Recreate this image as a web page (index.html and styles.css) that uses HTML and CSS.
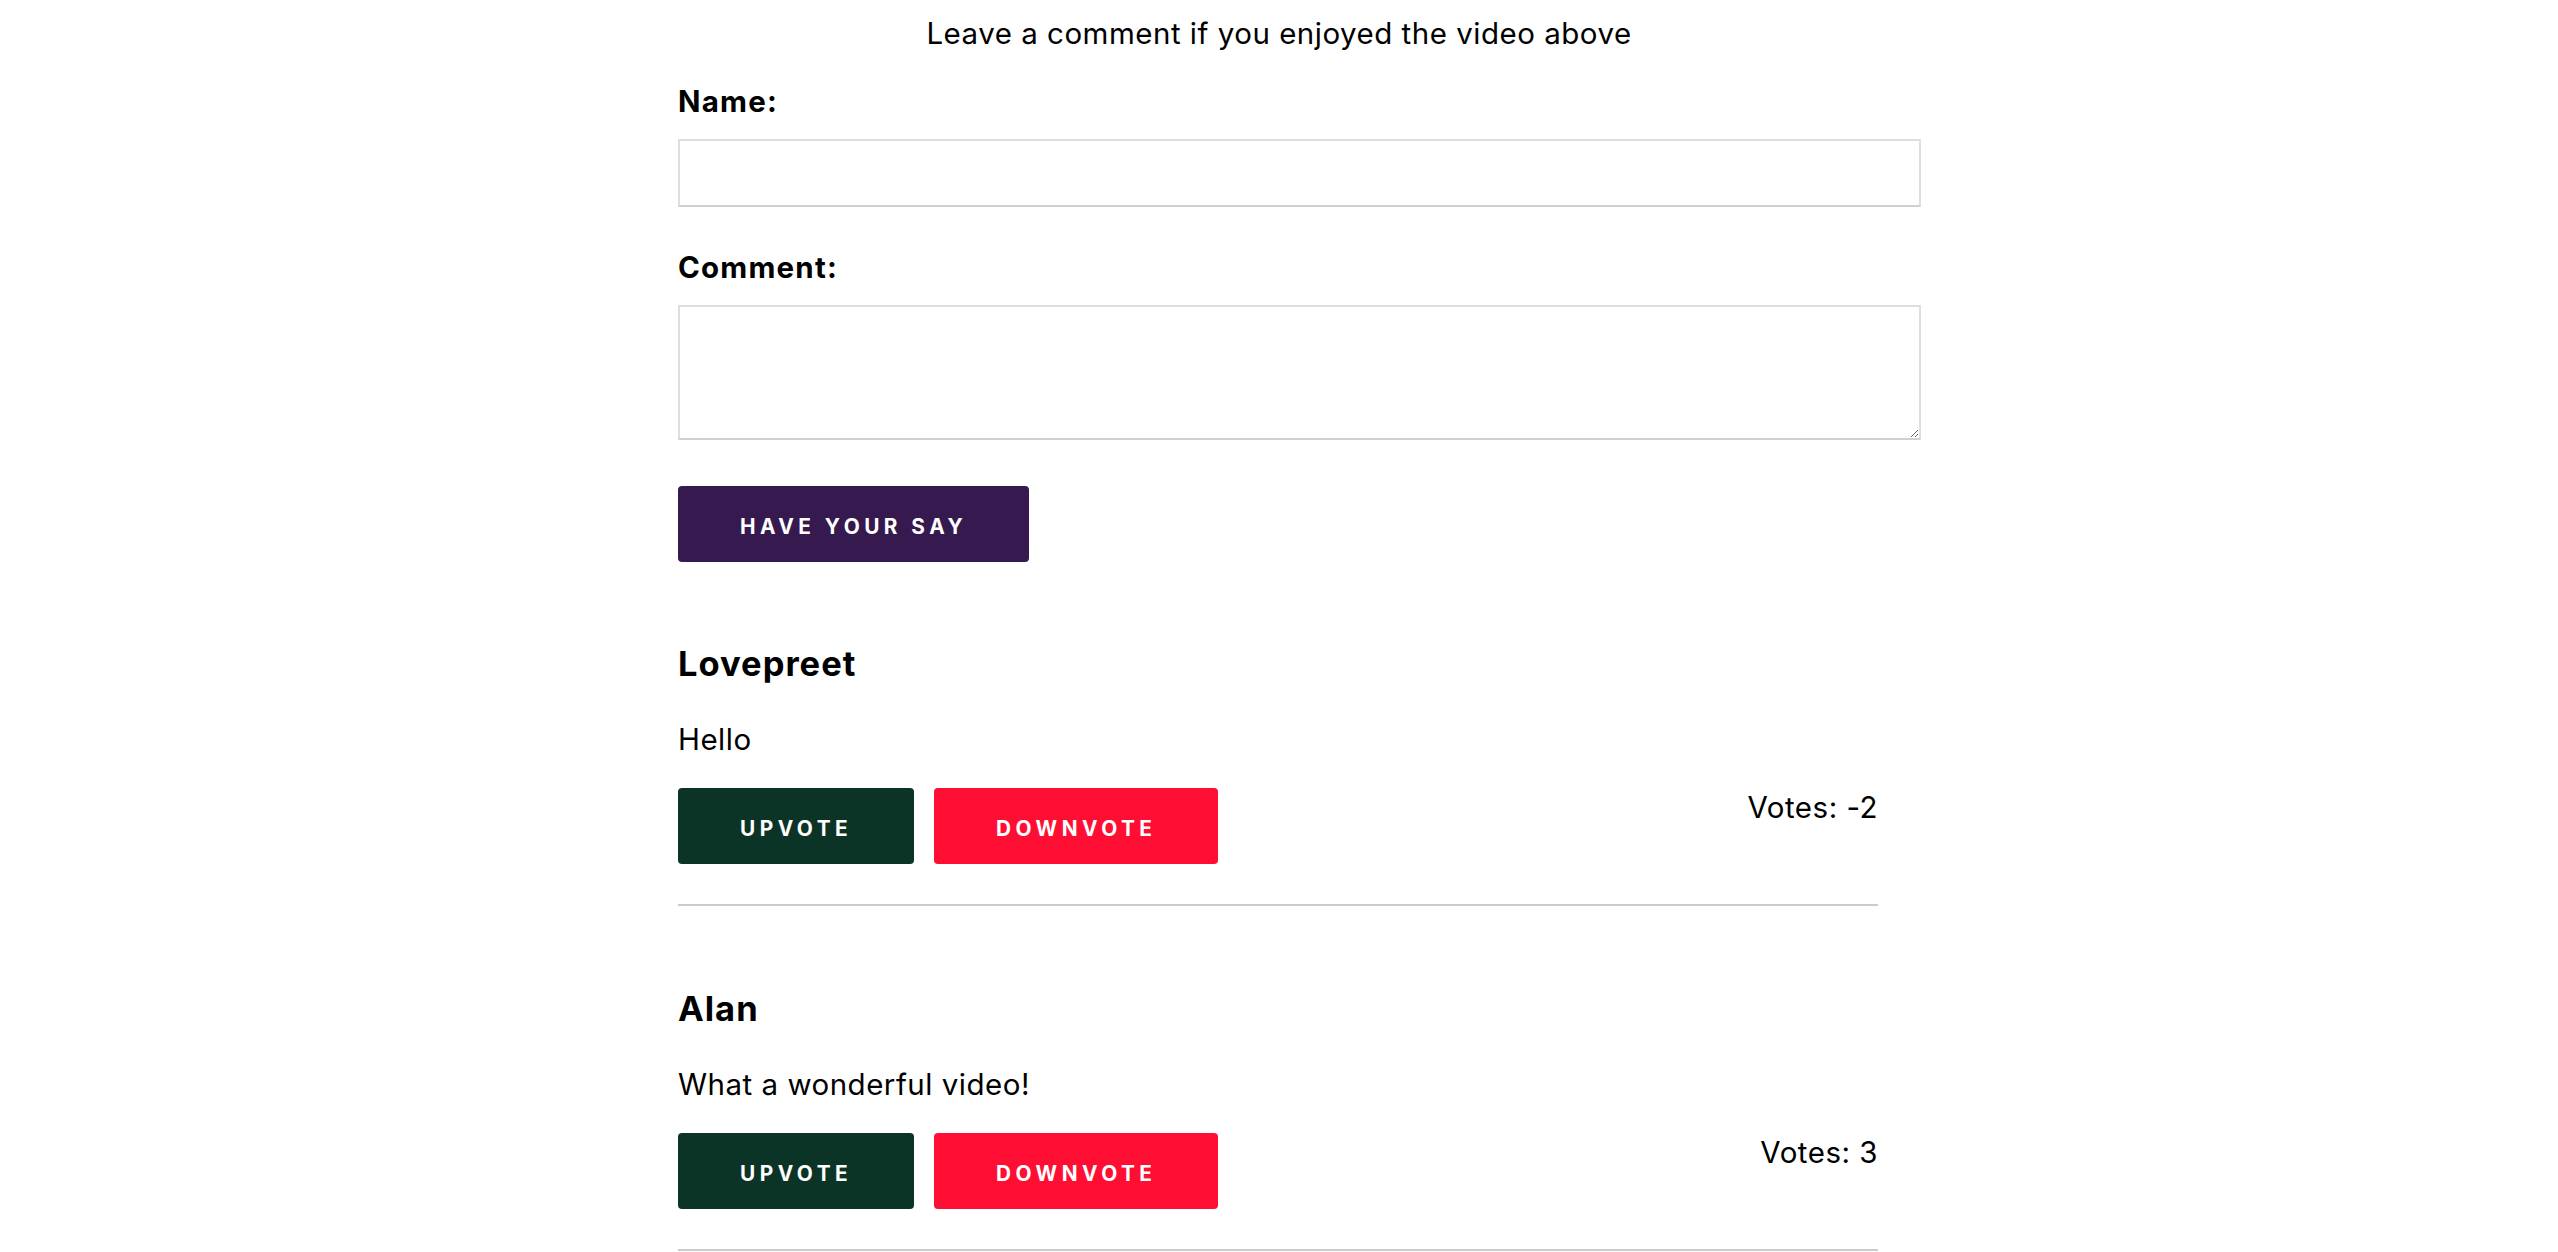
FILE: index.html
```html
<!DOCTYPE html>
<html lang="en">
<head>
<meta charset="utf-8">
<title>Comments</title>
<link rel="stylesheet" href="styles.css">
</head>
<body>
<p class="intro">Leave a comment if you enjoyed the video above</p>
<main class="container">
  <form class="comment-form">
    <label class="field-label" for="name">Name:</label>
    <input id="name" class="field-input" type="text">
    <label class="field-label" for="comment">Comment:</label>
    <textarea id="comment" class="field-textarea"></textarea>
    <button type="button" class="btn btn-submit">Have your say</button>
  </form>
  <section class="comments">
    <article class="comment">
      <h3 class="comment-name">Lovepreet</h3>
      <p class="comment-text">Hello</p>
      <div class="comment-actions">
        <div class="vote-buttons">
          <button type="button" class="btn btn-up">Upvote</button>
          <button type="button" class="btn btn-down">Downvote</button>
        </div>
        <span class="votes">Votes: -2</span>
      </div>
      <hr class="divider">
    </article>
    <article class="comment">
      <h3 class="comment-name">Alan</h3>
      <p class="comment-text">What a wonderful video!</p>
      <div class="comment-actions">
        <div class="vote-buttons">
          <button type="button" class="btn btn-up">Upvote</button>
          <button type="button" class="btn btn-down">Downvote</button>
        </div>
        <span class="votes">Votes: 3</span>
      </div>
      <hr class="divider">
    </article>
  </section>
</main>
</body>
</html>
```

FILE: styles.css
```css
html, body {
  margin: 0;
  padding: 0;
  background: #ffffff;
}

body {
  font-family: Inter, "Noto Sans", "Liberation Sans", sans-serif;
  font-size: 29.5px;
  letter-spacing: 0.5px;
  line-height: 35px;
  color: #000;
}

.intro {
  margin: 16px 0 0;
  text-align: center;
}

.container {
  width: 1202px;
  margin: 0 auto;
}

.comment-form {
  display: flex;
  flex-direction: column;
  align-items: flex-start;
  padding-top: 33px;
}

.field-label {
  display: block;
  font-weight: 700;
  letter-spacing: 1.2px;
  margin-bottom: 20px;
}

.field-input,
.field-textarea {
  display: block;
  width: 100%;
  box-sizing: content-box;
  padding: 0 18.5px;
  border: 2px solid #dedede;
  border-bottom-color: #d0d0d0;
  border-radius: 0;
  background: #fff;
  font: inherit;
  margin: 0;
}

.field-input {
  height: 64px;
  margin-bottom: 43px;
}

.field-textarea {
  height: 131px;
  margin-bottom: 46px;
  resize: both;
}

.btn {
  display: inline-flex;
  align-items: center;
  justify-content: center;
  height: 76px;
  padding: 4px 62px 0;
  box-sizing: border-box;
  border: none;
  border-radius: 4px;
  color: #fff;
  font-family: Inter, "Noto Sans", "Liberation Sans", sans-serif;
  font-size: 20.8px;
  font-weight: 700;
  letter-spacing: 0.215em;
  text-transform: uppercase;
  cursor: pointer;
}

.btn-submit {
  background: #35194f;
}

.btn-up {
  background: #0c3426;
}

.btn-down {
  background: #ff0e33;
}

.comments {
  padding-top: 81px;
  padding-right: 2px;
}

.comment-name {
  margin: 0 0 37.5px;
  font-size: 34.5px;
  letter-spacing: 1px;
  line-height: 41px;
  font-weight: 700;
}

.comment-text {
  margin: 0 0 31.5px;
}

.comment-actions {
  display: flex;
  justify-content: space-between;
  align-items: flex-start;
}

.vote-buttons {
  display: flex;
  gap: 20px;
}

.votes {
  margin-top: 2px;
}

.divider {
  margin: 40px 0 82px;
  border: none;
  height: 2px;
  background: #cccccc;
}
```
